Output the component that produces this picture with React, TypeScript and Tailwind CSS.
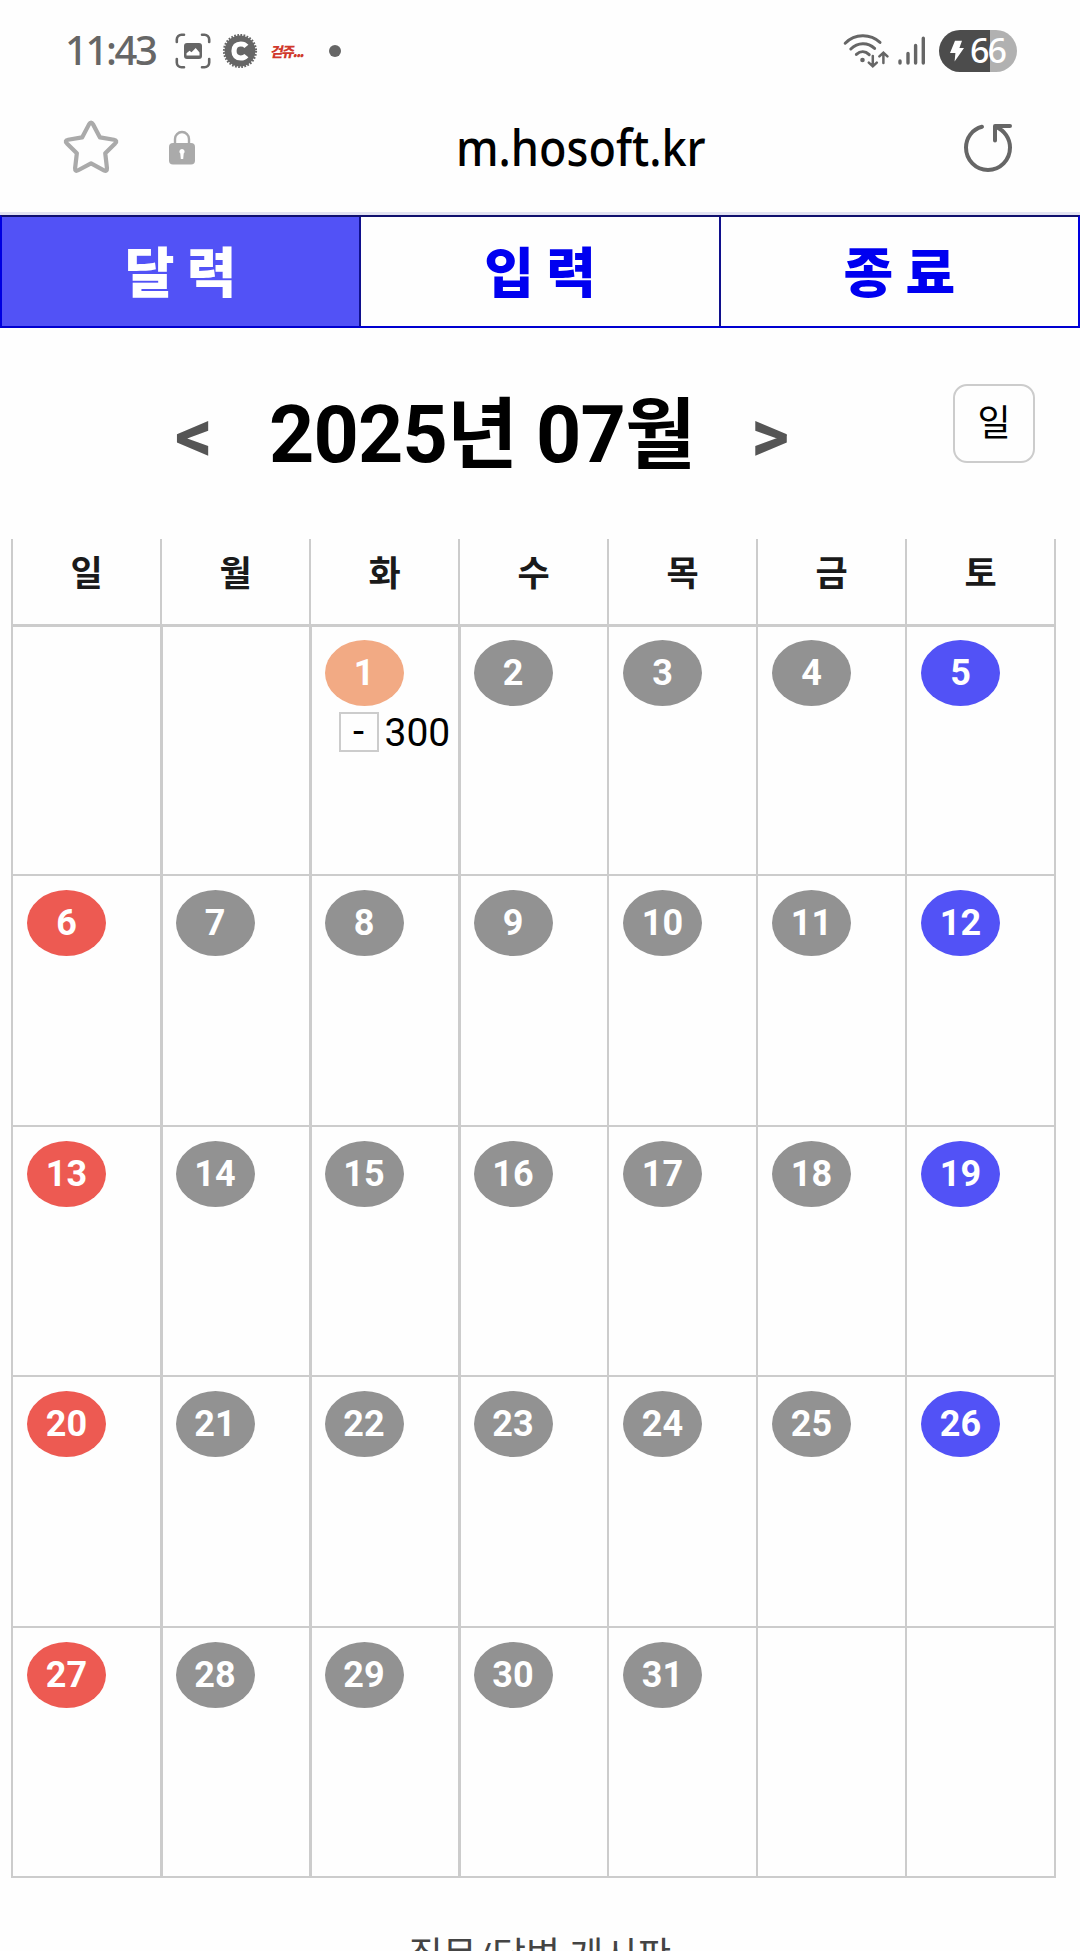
import { clsx } from "clsx";

const tabs = [
  { label: "달 력", active: true },
  { label: "입 력", active: false },
  { label: "종 료", active: false },
];

const weekdays = ["일", "월", "화", "수", "목", "금", "토"];

// July 2025 starts on a Tuesday
const firstDay = 2;
const daysInMonth = 31;
const today = 1;

const records: Record<number, { sign: string; amount: string }> = {
  1: { sign: "-", amount: "300" },
};

const cells = Array.from({ length: 35 }, (_, i) => {
  const day = i - firstDay + 1;
  return day >= 1 && day <= daysInMonth ? day : null;
});

const dayColor = (day: number, col: number) => {
  if (day === today) return "bg-[#f2aa84]";
  if (col === 0) return "bg-[#ed5a52]";
  if (col === 6) return "bg-[#5252f6]";
  return "bg-[#929292]";
};

const CaptureIcon = () => (
  <svg width="36" height="36" viewBox="0 0 36 36" fill="none" className="ml-[17px]">
    <path
      d="M1.8 9V6.5A4.7 4.7 0 0 1 6.5 1.8H9M27 1.8h2.5a4.7 4.7 0 0 1 4.7 4.7V9M34.2 26v3.5a4.7 4.7 0 0 1-4.7 4.7H27M9 34.2H6.5a4.7 4.7 0 0 1-4.7-4.7V26"
      stroke="#666"
      strokeWidth="2.6"
      strokeLinecap="round"
    />
    <rect x="9" y="10" width="18" height="16" rx="3" fill="#666" />
    <path d="M11.5 22.5v-2.2l3-2.6 2 1.6 4.2-4.2 3.8 4.4v3z" fill="#fff" />
  </svg>
);

const CoinIcon = () => (
  <svg width="36" height="36" viewBox="0 0 36 36" fill="none" className="ml-[11px]">
    <circle cx="18" cy="18" r="15.4" fill="#666" />
    <circle cx="18" cy="18" r="15.8" stroke="#666" strokeWidth="2.6" strokeDasharray="1.7 1.4" />
    <path d="M24.4 13.4Q22.4 11 18.8 11C14.4 11 12 13.6 12 18s2.4 7 6.8 7q3.6 0 5.6-2.4" stroke="#fff" strokeWidth="5.2" />
  </svg>
);

const WifiIcon = () => (
  <svg width="46" height="36" viewBox="0 0 46 36" fill="none" stroke="#666" strokeWidth="3" strokeLinecap="round">
    <path d="M2.2 10.2C12 .6 27 .4 37 9.4M7.8 16c7-6.8 16.8-7 23.8-.6M13.4 21.4c4-3.6 8.8-3.6 12.8.2" />
    <circle cx="19.5" cy="27" r="2.3" fill="#666" stroke="none" />
    <path d="M29.8 23v9.8M25.8 29.6l4 3.8 4-3.8M40.4 30v-9.6M36.4 23.4l4-3.8 4 3.8" strokeWidth="2.5" />
  </svg>
);

const SignalIcon = () => (
  <svg width="28" height="30" viewBox="0 0 28 30" stroke="#666" strokeWidth="3.4" strokeLinecap="round" className="ml-[9px]">
    <path d="M2 25v2M10 17.5V27M17.6 9.5V27M25.3 2.2V27" />
  </svg>
);

const Battery = () => (
  <div className="ml-[13px] flex h-[42px] w-[78px] items-center rounded-full bg-[linear-gradient(to_right,#4c4c4c_51px,#b1b1b1_51px)]">
    <svg width="14" height="22" viewBox="0 0 14 22" className="ml-[11px]">
      <path d="M5 .8h7L9.4 8H14L4.6 21.4 5.4 13H0z" fill="#fff" />
    </svg>
    <span className="ml-[6px] w-[36px] pb-0.5 font-['Noto_Sans',sans-serif] text-[34px] leading-none font-medium tracking-[-2px] text-white">
      66
    </span>
  </div>
);

const StatusBar = () => (
  <div className="flex h-[102px] shrink-0 items-center justify-between pr-[63px] pl-[65px]">
    <div className="flex items-center">
      <span className="w-[93px] pb-0.5 font-['Noto_Sans',sans-serif] text-[40px] leading-none font-medium tracking-[-2.4px] text-[#666]">
        11:43
      </span>
      <CaptureIcon />
      <CoinIcon />
      <span className="ml-[13px] w-[34px] -skew-x-12 font-['Noto_Sans_CJK_KR',sans-serif] text-[14px] leading-none font-black tracking-[-1.5px] whitespace-nowrap text-[#d0382c]">
        걷쥬...
      </span>
      <span className="ml-[24px] h-3 w-3 rounded-full bg-[#666]" />
    </div>
    <div className="flex items-center">
      <WifiIcon />
      <SignalIcon />
      <Battery />
    </div>
  </div>
);

const AddressBar = () => (
  <div className="flex h-[110px] shrink-0 items-center pb-[20px] pl-[62px]">
    <svg width="58" height="58" viewBox="0 0 58 58" fill="none">
      <path
        d="M26.9 5.6q2.1-3.8 4.2 0l7.2 13.6 14.6 2.4q4 .8 1.2 3.8L43.8 35.6l1.8 15.6q.2 4-3.2 2.2L29 46.2l-13.4 7.2q-3.4 1.8-3.2-2.2l1.8-15.6L3.9 25.4q-2.8-3 1.2-3.8l14.6-2.4z"
        stroke="#aaa"
        strokeWidth="4.4"
        strokeLinejoin="round"
        transform="translate(1.2 1) scale(.96)"
      />
    </svg>
    <svg width="26" height="35" viewBox="0 0 26 35" fill="none" className="ml-[49px]">
      <path d="M6 15V9a7 7 0 0 1 14 0v6" stroke="#aaa" strokeWidth="2.4" />
      <rect y="13" width="26" height="21.5" rx="4" fill="#aaa" />
      <path d="M13 19a2.6 2.6 0 0 1 1.7 4.6l-.5 5.4h-2.4l-.5-5.4A2.6 2.6 0 0 1 13 19z" fill="#fff" />
    </svg>
    <span className="ml-[261px] w-[252px] origin-left scale-x-[0.9] font-['Noto_Sans',sans-serif] text-[50px] leading-none font-medium whitespace-nowrap text-black">
      m.hosoft.kr
    </span>
    <svg width="54" height="54" viewBox="0 0 54 54" fill="none" className="ml-[253px]">
      <path
        d="M21 6.8C11 9.4 5 18 5 27.6 5 40 14.6 50 27 50s22-10 22-22.4C49 18.6 43.6 10.4 34.5 6.6M34 20.5V6h15"
        stroke="#666"
        strokeWidth="4"
        strokeLinecap="round"
        strokeLinejoin="round"
      />
    </svg>
  </div>
);

const TabBar = () => (
  <nav className="shrink-0 border-t-[3px] border-[#e2e2f2]">
    <div className="flex h-[113px] border-2 border-t-[#10106e] border-r-[#0000e0] border-b-[#0000d0] border-l-[#0000e0]">
      {tabs.map((tab, i) => (
        <a
          key={tab.label}
          className={clsx(
            "flex flex-1 items-center justify-center pb-1 font-['Noto_Sans_CJK_KR',sans-serif] text-[54px] leading-none font-black",
            i > 0 && "border-l-2 border-[#10108c]",
            tab.active ? "bg-[#5252f6] text-white" : "text-[#0000f0]"
          )}
        >
          {tab.label}
        </a>
      ))}
    </div>
  </nav>
);

const MonthHeader = () => (
  <div className="flex h-[211px] shrink-0 items-start pt-14 font-[Roboto,'Noto_Sans_CJK_KR',sans-serif]">
    <button className="mt-[15px] ml-[175px] w-[40px] text-left text-[74px] leading-none font-bold text-[#555]">
      &lt;
    </button>
    <h1 className="mt-[12px] ml-[54px] w-[430px] text-[79px] leading-none font-bold tracking-[-0.8px] whitespace-nowrap text-black">
      2025<span className="text-[77px]">년</span> 07<span className="text-[77px]">월</span>
    </h1>
    <button className="mt-[15px] ml-[52px] w-[40px] text-left text-[74px] leading-none font-bold text-[#555]">
      &gt;
    </button>
    <button className="ml-[162px] h-[79px] w-[82px] rounded-[14px] border-2 border-[#ccc] text-[36px] leading-none text-black">
      일
    </button>
  </div>
);

const Calendar = () => (
  <table className="ml-[11px] w-[1045px] shrink-0 table-fixed border-collapse font-[Roboto,'Noto_Sans_CJK_KR',sans-serif]">
    <thead>
      <tr>
        {weekdays.map((name) => (
          <th
            key={name}
            className="h-[86px] border-2 border-t-0 border-b-[3px] border-[#ccc] p-0 pb-[14px] text-[35px] leading-none font-bold text-[#1a1a1a]"
          >
            {name}
          </th>
        ))}
      </tr>
    </thead>
    <tbody>
      {[0, 1, 2, 3, 4].map((week) => (
        <tr key={week}>
          {cells.slice(week * 7, week * 7 + 7).map((day, col) => (
            <td
              key={col}
              className={clsx(
                "h-[250.4px] border-2 border-[#ccc] p-0 align-top",
                week === 0 ? "pt-[13px]" : "pt-[14px]",
                col > 0 && col < 4 ? "border-l-[3px] pl-[13px]" : "pl-[14px]"
              )}
            >
              {day && (
                <div
                  className={clsx(
                    "flex h-[66px] w-[79px] items-center justify-center rounded-[50%] text-[36px] leading-none font-bold text-white",
                    dayColor(day, col)
                  )}
                >
                  {day}
                </div>
              )}
              {day && records[day] && (
                <div className="mt-[6px] ml-[14px] flex items-center gap-[6px] text-[39px] leading-none text-black">
                  <span className="flex h-10 w-10 items-center justify-center border-2 border-[#ccc] text-[40px]">
                    {records[day].sign}
                  </span>
                  <span className="pt-0.5">{records[day].amount}</span>
                </div>
              )}
            </td>
          ))}
        </tr>
      ))}
    </tbody>
  </table>
);

export default function App() {
  return (
    <div className="flex h-[1951px] w-[1080px] flex-col overflow-hidden bg-[#fefefe]">
      <StatusBar />
      <AddressBar />
      <TabBar />
      <MonthHeader />
      <Calendar />
      <footer className="mt-[60px] shrink-0 text-center font-[Roboto,'Noto_Sans_CJK_KR',sans-serif] text-[37px] leading-none text-[#444]">
        질문/답변 게시판
      </footer>
    </div>
  );
}
